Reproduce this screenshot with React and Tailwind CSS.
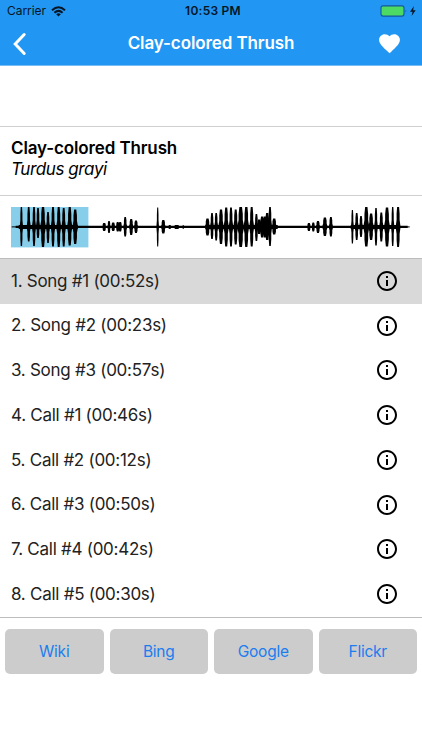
import React, { useState } from 'react';
import { MdFavorite, MdInfoOutline } from 'react-icons/md';

const recordings = [
    { id: 1, name: 'Song #1', length: '00:52s' },
    { id: 2, name: 'Song #2', length: '00:23s' },
    { id: 3, name: 'Song #3', length: '00:57s' },
    { id: 4, name: 'Call #1', length: '00:46s' },
    { id: 5, name: 'Call #2', length: '00:12s' },
    { id: 6, name: 'Call #3', length: '00:50s' },
    { id: 7, name: 'Call #4', length: '00:42s' },
    { id: 8, name: 'Call #5', length: '00:30s' },
];

const links = ['Wiki', 'Bing', 'Google', 'Flickr'];

// Each peak: x, height above the axis, height below the axis, width
const peaks = [
    [10.7, 20, 19, 1.8], [18, 20, 14.5, 2.2], [23.3, 20, 19, 2.2], [27.3, 19, 11, 2.2], [32.3, 20.5, 20, 3],
    [37.3, 15, 16, 2.2], [42.3, 20, 19.5, 2.4], [48, 20, 20, 2.6], [53, 19, 19.5, 2.4], [59, 20, 18.5, 2.8],
    [64.5, 17.5, 17, 3],
    [93.5, 4, 4, 2.6], [98.3, 6, 6, 2], [102.5, 4.5, 4, 2.6], [107, 5, 4.5, 2.4], [109.5, 5, 4.5, 2.4],
    [114.5, 10, 9.5, 2.2], [120.5, 8, 8, 2.6], [125.3, 6.5, 6, 2.6],
    [147, 19.5, 19.5, 1.4], [152.6, 7, 6.5, 2.8],
    [196.8, 8.5, 8.5, 3], [201.3, 14, 12, 2.2], [205.5, 14, 13.5, 2.2], [210.3, 17.5, 17, 3], [215.5, 19.5, 19.5, 2.8],
    [220.3, 19.5, 19.5, 2.4], [225, 17.5, 17.5, 2.6], [230, 20, 20, 3.6], [235.6, 20.5, 20, 3], [241, 20, 19.5, 2.6],
    [245.7, 13, 14, 2.2], [248.5, 7.5, 7, 3], [251.3, 10.5, 10.5, 2.6], [254, 10.5, 10.5, 3], [256.5, 14, 13, 3],
    [259.3, 20.5, 19, 2.2], [263.5, 8.5, 7.5, 3],
    [298.2, 4, 4, 2.4], [302.6, 4.5, 4.5, 2.2], [307.3, 6, 6, 2.6], [314.2, 9.5, 9, 3], [320.2, 10, 9.5, 2.4],
    [341.7, 17, 16.5, 1.6], [346, 14, 13, 2.2], [350.3, 11, 10, 2.2], [355.6, 20, 19.5, 3.2], [360.4, 13.5, 13, 3],
    [365.3, 19, 18.5, 2], [370.6, 14.5, 14.5, 2.4], [376.3, 19.5, 19.5, 3.2], [382, 20, 19, 1.8], [387.4, 20.5, 20, 2.6],
];

const AXIS = 20.3;

const peakPath = ([x, up, down, w]) => {
    const tip = w * 0.36;
    const side = w * 0.58;
    const base = w * 0.95;
    const top = AXIS - up;
    const bottom = AXIS + down;
    return [
        `M${x - base} ${AXIS}`,
        `L${x - side} ${AXIS - up * 0.35}`,
        `L${x - side} ${AXIS - up * 0.65}`,
        `L${x - tip} ${top}`,
        `L${x + tip} ${top}`,
        `L${x + side} ${AXIS - up * 0.65}`,
        `L${x + side} ${AXIS - up * 0.35}`,
        `L${x + base} ${AXIS}`,
        `L${x + side} ${AXIS + down * 0.35}`,
        `L${x + side} ${AXIS + down * 0.65}`,
        `L${x + tip} ${bottom}`,
        `L${x - tip} ${bottom}`,
        `L${x - side} ${AXIS + down * 0.65}`,
        `L${x - side} ${AXIS + down * 0.35}Z`,
    ].join('');
};

const Waveform = () => (
    <svg className="block h-[41px] w-[400px]" viewBox="0.3 0.4 400 41">
        <rect x="0" y="0" width="77.7" height="40.8" fill="#87ceeb" />
        <path d="M1 20.3H399" stroke="#000" strokeWidth="1" />
        <path d="M5 20.3H397" stroke="#000" strokeWidth="2.2" />
        <path d="M8 20.3H67M195 20.3H267M340 20.3H389" stroke="#000" strokeWidth="4" />
        <path d="M158 20.3H160M164 20.3H168M172 20.3H173" stroke="#000" strokeWidth="4" />
        <path d="M247 20.3L251 13L254 11L256 13L260 11V29L256 28L251 27Z" fill="#000" />
        {peaks.map((peak) => (
            <path key={peak[0]} d={peakPath(peak)} fill="#000" />
        ))}
    </svg>
);

const StatusBar = () => (
    <div className="grid h-[22px] grid-cols-3 items-center pr-[5px] pl-[7px] text-[#071626]">
        <div className="flex items-center gap-[5px]">
            <span className="text-[12px] tracking-[-0.05px]">Carrier</span>
            <svg className="h-[11px] w-[15px]" viewBox="0 0 15 11" fill="none" stroke="currentColor" strokeWidth="2">
                <path d="M1 4.2Q7.5 -1.7 14 4.2" />
                <path d="M3.4 6.7Q7.5 3.1 11.6 6.7" />
                <path d="M5.2 8.2Q7.5 6.4 9.8 8.2L7.5 10.6Z" fill="currentColor" stroke="none" />
            </svg>
        </div>
        <span className="pl-[2px] text-center text-[12px] font-semibold tracking-[0.25px]">10:53 PM</span>
        <div className="flex items-center justify-end">
            <svg className="h-[12px] w-[37px]" viewBox="0 0 37 12">
                <rect x="1" y="0.9" width="23" height="10.2" rx="2" fill="#4cd964" stroke="#14599a" strokeWidth="1.1" />
                <path d="M25.6 4.3Q27 6 25.6 7.8Z" fill="#14599a" />
                <path d="M34 1L30 6.7H32.6L31.6 11L35.7 5.2H33.1Z" fill="#071626" />
            </svg>
        </div>
    </div>
);

const App = () => {
    const [selectedId, setSelectedId] = useState(1);

    return (
        <div className="flex h-[750px] w-[422px] flex-col bg-white font-['Inter','Noto_Sans',sans-serif] text-black">
            {/* Header */}
            <header className="h-[66px] shrink-0 border-b border-[#79bff7] bg-[#2196f3]">
                <StatusBar />
                <div className="grid h-[43px] grid-cols-[60px_1fr_60px] items-center text-white">
                    <button className="pl-[12px]">
                        <svg className="h-[24px] w-[16px]" viewBox="0 0.5 16 24" fill="none" stroke="currentColor" strokeWidth="3">
                            <path d="M12.2 3L3.2 12.5L12.2 22" strokeLinecap="round" />
                        </svg>
                    </button>
                    <h1 className="text-center text-[17px] font-semibold tracking-[-0.1px]">Clay-colored Thrush</h1>
                    <button className="flex justify-end pr-[20px]">
                        <MdFavorite size={25} />
                    </button>
                </div>
            </header>

            {/* Species */}
            <section className="mt-[60px] h-[70px] shrink-0 border-y border-[#cfcfcf] px-[11px] pt-[11px]">
                <h2 className="text-[17px] leading-[21px] font-semibold tracking-[-0.13px]">Clay-colored Thrush</h2>
                <p className="text-[17px] leading-[21px] tracking-[-0.4px] italic">Turdus grayi</p>
            </section>

            {/* Sound wave */}
            <section className="h-[62px] shrink-0 px-[11px] pt-[11px]">
                <Waveform />
            </section>

            {/* Recordings */}
            <ul className="h-[360px] shrink-0 border-y border-[#bdbdbd]">
                {recordings.map((recording) => (
                    <li
                        key={recording.id}
                        onClick={() => setSelectedId(recording.id)}
                        className={`flex h-[44.75px] items-center justify-between pr-[23px] pb-[1px] pl-[11px] ${recording.id === selectedId ? 'bg-[#d9d9d9]' : 'bg-white'}`}
                    >
                        <span className="pt-[1px] text-[17px] tracking-[-0.27px] text-[#222]">
                            {`${recording.id}. ${recording.name} (${recording.length})`}
                        </span>
                        <MdInfoOutline size={24} />
                    </li>
                ))}
            </ul>

            {/* External links */}
            <nav className="grid grid-cols-4 gap-[6px] px-[5px] pt-[11px]">
                {links.map((link) => (
                    <button key={link} className="h-[45px] rounded-[5px] bg-[#cccccc] text-[15.5px] tracking-[-0.25px] text-[#1a7df0]">
                        {link}
                    </button>
                ))}
            </nav>
        </div>
    );
};

export default App;
